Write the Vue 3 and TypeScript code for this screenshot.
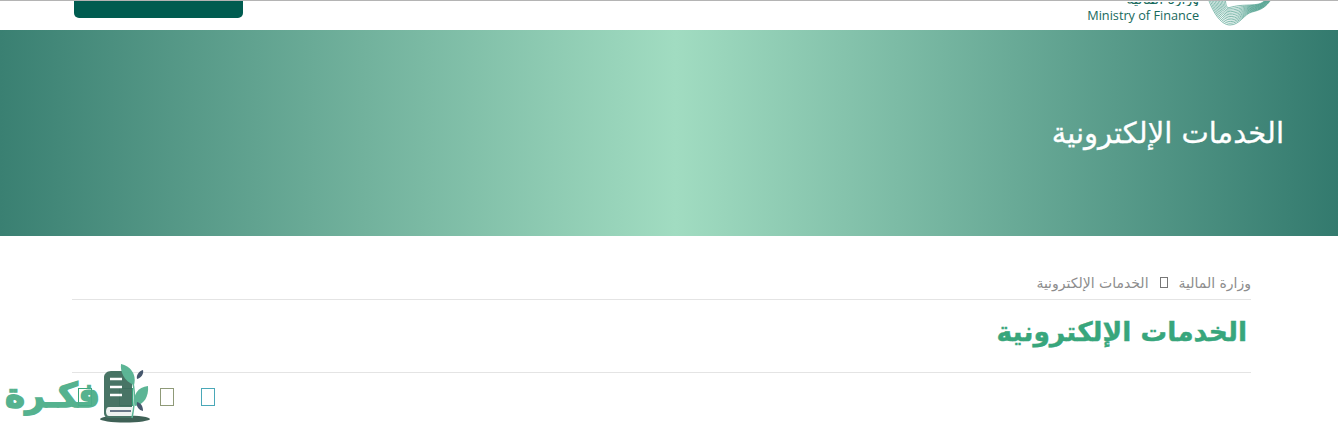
<template>
  <div class="page">
    <header class="topbar">
      <div class="login-tab"></div>
      <div class="brand">
        <div class="brand-text">
          <span class="brand-ar">وزارة المالية</span>
          <span class="brand-en">Ministry of Finance</span>
        </div>
        <svg class="brand-mark" width="64" height="26" viewBox="0 0 64 26" fill="none">
          <path v-for="w in waves" :key="w" :d="w" stroke="#2f8f79" stroke-width="0.6" />
        </svg>
      </div>
    </header>

    <section class="banner">
      <h1 class="banner-title">الخدمات الإلكترونية</h1>
    </section>

    <main class="content">
      <nav class="crumbs">
        <a>وزارة المالية</a>
        <span class="tofu tofu-crumb"></span>
        <a>الخدمات الإلكترونية</a>
      </nav>
      <h2 class="title">الخدمات الإلكترونية</h2>
      <div class="share">
        <span class="tofu"></span>
        <span class="tofu"></span>
        <span class="tofu tofu-olive"></span>
        <span class="tofu tofu-blue"></span>
      </div>
    </main>

    <div class="watermark">
      <span class="wm-text">فكـرة</span>
      <svg class="wm-logo" width="52" height="62" viewBox="0 0 52 62" fill="none">
        <ellipse cx="25" cy="56" rx="25" ry="3.500" fill="#35594e" />
        <path d="M11 8h14c5 0 7 3 7 6v41H9c-3 0-5-2-5-5V14c0-3 3-6 7-6z" fill="#3f6d5d" />
        <path d="M9 44h23v9H9c-2 0-3-2-3-4.500S7 44 9 44z" fill="#eef2f0" />
        <path d="M10 48h21" stroke="#3d4f66" stroke-width="1.600" />
        <path d="M10 16h12M10 24h12M10 32h12" stroke="#fff" stroke-width="2.400" />
        <path d="M32 55C35 40 36 22 29 10" stroke="#54b290" stroke-width="1.500" />
        <path d="M34 22C24 18 20 9 21 1c9 2 16 10 13 21z" fill="#54b290" />
        <path d="M35 43c-3-11 3-19 13-20 1 10-4 19-13 20z" fill="#54b290" />
        <path d="M37 16c-1-4 2-8 6-9 1 4-2 8-6 9z" fill="#3d4f66" />
        <path d="M37 39c4 1 6 4 6 9-4-1-7-4-6-9z" fill="#3d4f66" />
      </svg>
    </div>
  </div>
</template>

<script setup lang="ts">
// contour lines of the ministry mark, only the lower part shows under the top edge
const waves: string[] = Array.from({ length: 12 }, (_, i) => {
  const k = i * 1.3
  return `M${k * 1.2} -2 C${4 + k} 10 ${12 + k * 0.5} ${25 - k * 1.2} ${22 + k * 0.3} ${25 - k * 1.3} S36 ${14 - k * 0.6} 44 ${12 - k * 0.5} S${58 - k * 0.3} ${8 - k * 0.3} ${64 - k * 0.3} -2`
})
</script>

<style scoped>
.page {
  position: relative;
  width: 1338px;
  height: 423px;
  overflow: hidden;
  background: #fff;
  font-family: "DejaVu Sans", "Noto Sans", sans-serif;
}

.topbar {
  height: 30px;
  box-sizing: border-box;
  border-top: 1px solid #b4b4b4;
  padding: 0 66px 0 74px;
  display: flex;
  justify-content: space-between;
  overflow: hidden;
}

.login-tab {
  width: 169px;
  height: 17px;
  background: #005c50;
  border-radius: 0 0 5px 5px;
}

.brand {
  display: flex;
  gap: 9px;
  height: 25px;
  overflow: hidden;
}

.brand-text {
  display: flex;
  flex-direction: column;
  align-items: flex-end;
  justify-content: flex-end;
  color: #17695c;
}

.brand-ar {
  font-size: 14px;
  line-height: 14px;
  height: 4px;
  overflow: hidden;
  display: flex;
  align-items: flex-end;
}

.brand-en {
  font-family: "Open Sans", sans-serif;
  font-size: 12.700px;
  line-height: 19px;
  margin-bottom: 1px;
}

.brand-mark {
  margin-top: -1px;
}

.banner {
  height: 206px;
  background: linear-gradient(90deg, #3a8072 0%, #a1dcc1 50.500%, #337a6e 100%);
  display: flex;
  align-items: center;
  justify-content: flex-end;
  padding: 0 54px;
}

.banner-title {
  margin: 0;
  direction: rtl;
  color: #fff;
  font-size: 29px;
  font-weight: 400;
  line-height: 1.2;
  -webkit-text-stroke: 0.3px #fff;
}

.content {
  width: 1179px;
  margin-left: 72px;
  direction: rtl;
}

.crumbs {
  height: 64px;
  box-sizing: border-box;
  padding-top: 37px;
  border-bottom: 1px solid #e4e4e4;
  display: flex;
  align-items: flex-start;
  gap: 11px;
  color: #8d8d8d;
  font-size: 14px;
  line-height: 20px;
}

.title {
  margin: 0;
  height: 73px;
  box-sizing: border-box;
  padding: 14px 4px 0 0;
  border-bottom: 1px solid #e4e4e4;
  color: #38a67c;
  font-size: 26.500px;
  font-weight: 700;
  line-height: 36px;
  -webkit-text-stroke: 0.4px #38a67c;
}

.share {
  direction: ltr;
  display: flex;
  gap: 27px;
  padding: 15px 0 0 6px;
}

.tofu {
  display: block;
  width: 14px;
  height: 18px;
  box-sizing: border-box;
  border: 1px solid #38a67c;
}

.tofu-crumb {
  width: 8px;
  height: 11px;
  margin-top: 4px;
  border-color: #777;
}

.tofu-olive {
  border-color: #8f9a78;
}

.tofu-blue {
  border-color: #4aa8b8;
}

.watermark {
  position: absolute;
  left: 0;
  top: 362px;
  display: flex;
  align-items: flex-start;
  color: #4cae8a;
  opacity: 0.95;
}

.wm-text {
  direction: rtl;
  width: 100px;
  font-size: 34px;
  font-weight: 700;
  line-height: 66px;
  white-space: nowrap;
  -webkit-text-stroke: 1.5px #4cae8a;
}

.wm-logo {
  margin-top: 1px;
}
</style>
